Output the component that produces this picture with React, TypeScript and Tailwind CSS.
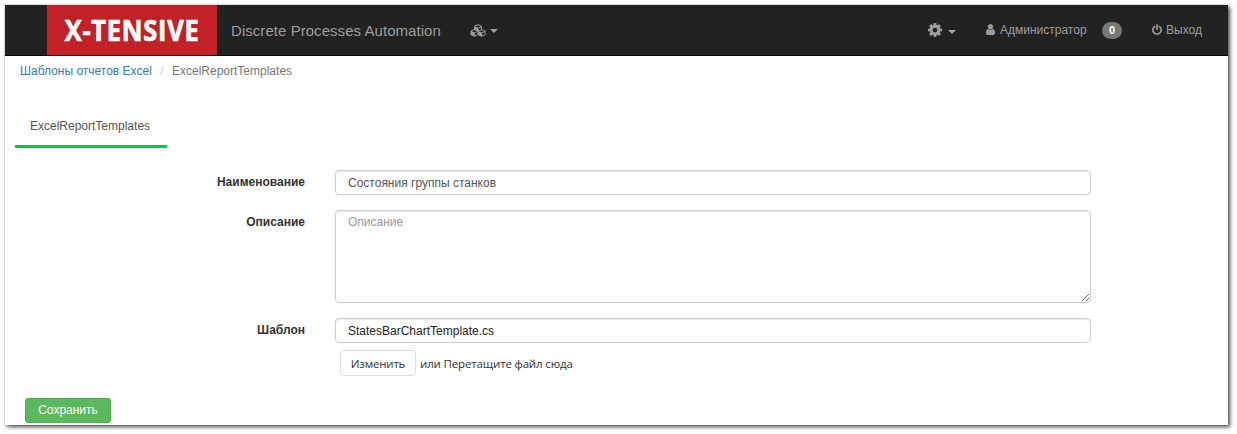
import React from "react";

const CUBES =
  "M640 1632l384-192v-314l-384 164v342zm-64-454l404-173-404-173-404 173zm1088 454l384-192v-314l-384 164v342zm-64-454l404-173-404-173-404 173zm-448-293l384-165v-266l-384 164v267zm-64-379l441-189-441-189-441 189zm1088 518v416q0 36-19 67t-52 47l-448 224q-25 14-57 14t-57-14l-448-224q-4-2-7-4-2 2-7 4l-448 224q-25 14-57 14t-57-14l-448-224q-33-16-52-47t-19-67v-416q0-38 21.500-70t56.500-48l434-186v-400q0-38 21.500-70t56.500-48l448-192q23-10 50-10t50 10l448 192q35 16 56.500 48t21.500 70v400l434 186q36 16 57 48t21 70z";
const COG =
  "M1152 896q0-106-75-181t-181-75-181 75-75 181 75 181 181 75 181-75 75-181zm512-109v222q0 12-8 23t-20 13l-185 28q-19 54-39 91 35 50 107 138 10 12 10 25t-9 23q-27 37-99 108t-94 71q-12 0-26-9l-138-108q-44 23-91 38-16 136-29 186-7 28-36 28h-222q-14 0-24.5-8.5t-11.5-21.5l-28-184q-49-16-90-37l-141 107q-10 9-25 9-14 0-25-11-126-114-165-168-7-10-7-23 0-12 8-23 15-21 51-66.5t54-70.5q-27-50-41-99l-183-27q-13-2-21-12.5t-8-23.5v-222q0-12 8-23t19-13l186-28q14-46 39-92-40-57-107-138-10-12-10-24 0-10 9-23 26-36 98.5-107.5t94.5-71.5q13 0 26 10l138 107q44-23 91-38 16-136 29-186 7-28 36-28h222q14 0 24.5 8.5t11.5 21.5l28 184q49 16 90 37l142-107q9-9 24-9 13 0 25 10 129 119 165 170 7 8 7 22 0 12-8 23-15 21-51 66.5t-54 70.5q26 50 41 98l183 28q13 2 21 12.5t8 23.5z";
const USER =
  "M1280 1399q0 109-62.5 187t-150.5 78h-854q-88 0-150.5-78t-62.5-187q0-85 8.5-160.5t31.5-152 58.5-131 94-89 134.5-34.5q131 128 313 128t313-128q76 0 134.500 34.500t94 89 58.500 131 31.500 152 8.500 160.500zm-256-887q0 159-112.500 271.500t-271.500 112.500-271.500-112.500-112.500-271.500 112.500-271.500 271.500-112.500 271.500 112.500 112.500 271.500z";
const POWER =
  "M1664 896q0 156-61 298t-164 245-245 164-298 61-298-61-245-164-164-245-61-298q0-182 80.5-343t226.5-270q43-32 95.5-25t83.5 50q32 42 24.5 94.5t-49.5 84.5q-98 74-151.5 181t-53.5 228q0 104 40.5 198.5t109.5 163.5 163.5 109.5 198.5 40.5 198.5-40.5 163.5-109.5 109.5-163.5 40.5-198.5q0-121-53.5-228t-151.5-181q-42-32-49.5-84.5t24.5-94.5q31-43 84-50t95 25q146 109 226.5 270t80.5 343zm-640-768v640q0 52-38 90t-90 38-90-38-38-90v-640q0-52 38-90t90-38 90 38 38 90z";

function Glyph({ d, viewBox, className }: { d: string; viewBox: string; className: string }) {
  return (
    <svg viewBox={viewBox} className={className} fill="currentColor" aria-hidden="true">
      <path d={d} />
    </svg>
  );
}

function Caret({ className }: { className: string }) {
  return (
    <span
      className={`h-0 w-0 shrink-0 border-x-4 border-t-4 border-x-transparent border-t-[#9d9d9d] ${className}`}
    />
  );
}

function Navbar() {
  return (
    <header className="flex h-[51px] items-start border-b border-[#080808] bg-[#222] text-[#9d9d9d]">
      <div className="ml-[42px] flex h-[50px] w-[170px] shrink-0 items-center justify-center bg-[#c22127]">
        <span className="origin-center scale-x-[0.91] font-['Open_Sans','Noto_Sans',sans-serif] text-[28px] leading-[50px] font-bold tracking-[0.8px] whitespace-nowrap text-white [-webkit-text-stroke:0.7px_white]">
          X-TENSIVE
        </span>
      </div>
      <span className="ml-[14px] w-[225px] shrink-0 text-[15px] leading-[51px] tracking-[0.05px] whitespace-nowrap">
        Discrete Processes Automation
      </span>
      <button className="ml-[14px] flex h-[50px] items-center">
        <Glyph d={CUBES} viewBox="-64 0 2304 1792" className="h-[13px] w-[16px]" />
        <Caret className="mt-[2px] ml-[4px]" />
      </button>
      <nav className="ml-auto flex h-[50px] items-center">
        <button className="flex items-center">
          <Glyph d={COG} viewBox="128 128 1536 1536" className="h-[14px] w-[14px]" />
          <Caret className="mt-[4px] ml-[6px]" />
        </button>
        <a className="ml-[30px] flex items-center">
          <Glyph d={USER} viewBox="0 128 1280 1536" className="mb-px h-[11px] w-[9px]" />
          <span className="ml-[5px] w-[87px] text-[12px] whitespace-nowrap">Администратор</span>
        </a>
        <span className="ml-[15px] flex h-[17px] w-[20px] items-center justify-center rounded-full bg-[#777] text-[11px] font-bold text-white">
          0
        </span>
        <a className="mr-[26px] ml-[30px] flex items-center">
          <Glyph d={POWER} viewBox="128 0 1536 1664" className="mb-[2px] h-[11px] w-[10px]" />
          <span className="ml-[4px] w-[36px] text-[12px] whitespace-nowrap">Выход</span>
        </a>
      </nav>
    </header>
  );
}

const field =
  "block w-[756px] rounded-[4px] border border-[#ccc] bg-white px-[12px] text-[12px] shadow-[inset_0_1px_1px_rgba(0,0,0,0.075)] outline-none";
const label =
  "w-[300px] shrink-0 text-right text-[12px] leading-[17px] font-bold text-[#333] mt-[4px]";

export default function App() {
  return (
    <div className="h-[434px] w-[1237px] overflow-hidden bg-white pt-[5px] pl-[5px] font-['Liberation_Sans',Arial,sans-serif]">
      <main className="flex h-[420px] w-[1223px] flex-col bg-white shadow-[2px_2px_4px_rgba(0,0,0,0.7),0_0_2px_rgba(0,0,0,0.2)]">
        <Navbar />
        <div className="flex h-[30px] items-center pl-[15px] text-[12px] whitespace-nowrap">
          <a className="w-[132px] text-[#337ab7]">Шаблоны отчетов Excel</a>
          <span className="w-[20px] text-center text-[#ccc]">/</span>
          <span className="text-[#777]">ExcelReportTemplates</span>
        </div>
        <div className="mt-[19px] ml-[10px] flex h-[43px] w-[152px] items-center border-b-[3px] border-[#00c853] pt-[2px] pl-[15px] text-[12px] text-[#555]">
          ExcelReportTemplates
        </div>
        <form className="mt-[22px] flex flex-col">
          <div className="flex h-[40px] items-start gap-[30px]">
            <label className={label}>Наименование</label>
            <input className={`${field} h-[25px] text-[#555]`} defaultValue="Состояния группы станков" />
          </div>
          <div className="flex h-[108px] items-start gap-[30px]">
            <label className={label}>Описание</label>
            <textarea
              className={`${field} h-[93px] resize pt-[3px] leading-[17px] text-[#555] placeholder:text-[#999]`}
              placeholder="Описание"
            />
          </div>
          <div className="flex h-[32px] items-start gap-[30px]">
            <label className={label}>Шаблон</label>
            <input className={`${field} h-[25px] text-[#222]`} defaultValue="StatesBarChartTemplate.cs" />
          </div>
          <div className="ml-[335px] flex h-[26px] items-center font-['Open_Sans','Noto_Sans',sans-serif] text-[11.5px] text-[#333]">
            <button
              type="button"
              className="h-[26px] w-[76px] rounded-[4px] border border-[#dcdcdc] bg-white pt-px tracking-[-0.2px]"
            >
              Изменить
            </button>
            <span className="ml-[4px] pt-[2px] tracking-[-0.15px] whitespace-nowrap">или Перетащите файл сюда</span>
          </div>
          <button
            type="button"
            className="mt-[22px] ml-[20px] h-[25px] w-[86px] rounded-[3px] border border-[#4cae4c] bg-[#5cb85c] pb-[2px] text-[12px] text-white"
          >
            Сохранить
          </button>
        </form>
      </main>
    </div>
  );
}
